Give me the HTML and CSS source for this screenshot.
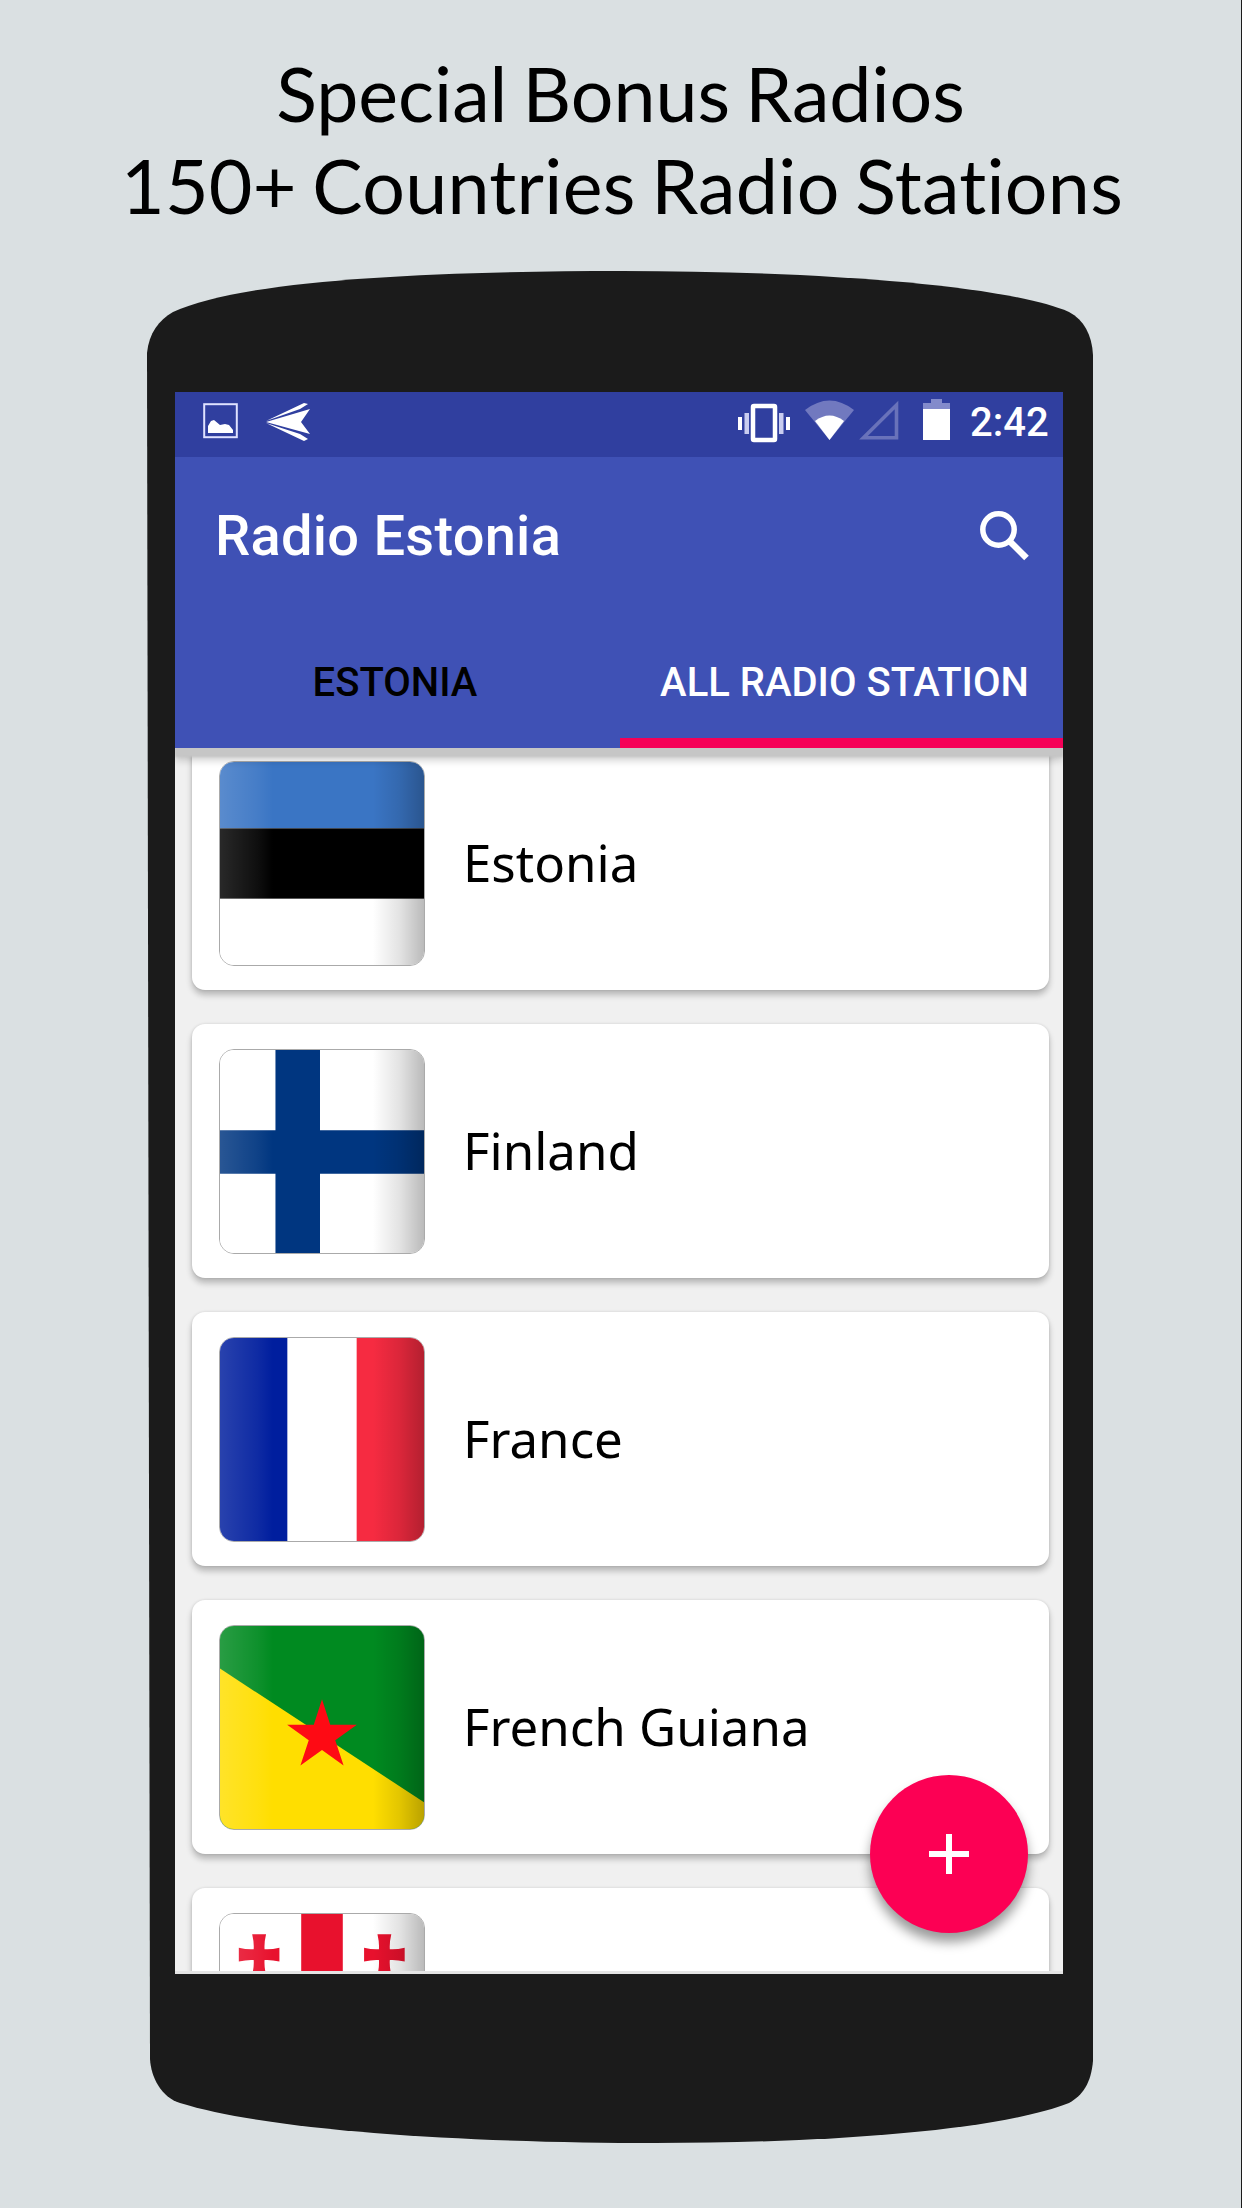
FILE: index.html
```html
<!DOCTYPE html>
<html lang="en">
<head>
    <meta charset="UTF-8">
    <meta name="viewport" content="width=device-width, initial-scale=1.0">
    <title>Radio Estonia</title>
    <link rel="stylesheet" href="styles.css">
</head>
<body>
    <h1 class="headline">
        <span class="headline-top">Special Bonus Radios</span>
        <span class="headline-bottom">150+ Countries Radio Stations</span>
    </h1>

    <div class="phone">
        <svg class="phone-body" viewBox="0 0 946 1873">
            <path fill="#1b1b1b" d="M0 82C2 62 12 49 26 41C95 9 280 0 475 0C670 0 860 14 922 41C937 49 945 64 946 84V1790C944 1812 936 1824 922 1832C850 1860 680 1872 508 1872C340 1872 130 1862 33 1832C14 1826 4 1806 3 1788Z"/>
        </svg>

        <div class="screen">
            <div class="status-bar">
                <svg width="35" height="36" viewBox="0 0 35 36">
                    <rect x="1.2" y="1.2" width="32.6" height="33" fill="none" stroke="#dfe2ff" stroke-width="2"/>
                    <path fill="#fff" d="M5 30V23L8 18L11 17L17 22L22 21L26 22L30 27V30Z"/>
                </svg>
                <svg class="arrow-icon" width="45" height="38" viewBox="0 0 45 38">
                    <path fill="#fff" d="M0 19L44 6L35 19L44 31ZM0 18L38 0L42 1L34 6ZM0 20L38 38L42 36L34 31Z"/>
                </svg>
                <svg class="vibrate-icon" width="52" height="40" viewBox="0 0 52 40">
                    <rect x="15" y="3" width="22" height="34" rx="1" fill="none" stroke="#fff" stroke-width="4.500"/>
                    <path fill="#fff" d="M0 14H4V27H0ZM48 14H52V27H48Z"/>
                    <path fill="#c9cdf0" d="M6.500 10H11V31H6.500ZM41 10H45.500V31H41Z"/>
                </svg>
                <svg class="wifi-icon" width="49" height="40" viewBox="0 0 49 40">
                    <path fill="#7179bf" d="M0 10Q24.500 -9 49 10L24.500 40Z"/>
                    <path fill="#fff" d="M10 21Q24.500 10 39 21L24.500 40Z"/>
                </svg>
                <svg class="signal-icon" width="40" height="40" viewBox="0 0 40 40">
                    <path fill="none" stroke="#6972ba" stroke-width="3.600" d="M4.500 37.700H37.500V5Z"/>
                </svg>
                <svg class="battery-icon" width="27" height="41" viewBox="0 0 27 41">
                    <path fill="#838bcb" d="M8 0H19V4H27V11H0V4H8Z"/>
                    <path fill="#fff" d="M0 10H27V41H0Z"/>
                </svg>
                <span class="clock">2:42</span>
            </div>

            <div class="app-bar">
                <div class="toolbar">
                    <span class="title">Radio Estonia</span>
                    <svg width="50" height="50" viewBox="0 0 50 50">
                        <circle cx="18.500" cy="18.500" r="15.700" fill="none" stroke="#fff" stroke-width="5.500"/>
                        <path stroke="#fff" stroke-width="6.500" d="M29 29.500L46.500 47"/>
                    </svg>
                </div>
                <div class="tabs">
                    <div class="tab">ESTONIA</div>
                    <div class="tab active">ALL RADIO STATION</div>
                </div>
            </div>

            <div class="list">
                <div class="card">
                    <svg class="flag" viewBox="0 0 206 205">
                        <defs>
                            <linearGradient id="gloss">
                                <stop offset="0" stop-color="#fff" stop-opacity=".16"/>
                                <stop offset=".18" stop-color="#fff" stop-opacity=".06"/>
                                <stop offset=".26" stop-color="#fff" stop-opacity="0"/>
                            </linearGradient>
                            <linearGradient id="shade">
                                <stop offset=".75" stop-color="#000" stop-opacity="0"/>
                                <stop offset=".88" stop-color="#000" stop-opacity=".11"/>
                                <stop offset="1" stop-color="#000" stop-opacity=".27"/>
                            </linearGradient>
                            <g id="shine">
                                <rect width="206" height="205" fill="url(#gloss)"/>
                                <rect width="206" height="205" fill="url(#shade)"/>
                            </g>
                        </defs>
                        <rect width="206" height="205" fill="#fff"/>
                        <rect width="206" height="67" fill="#3a75c4"/>
                        <rect y="67" width="206" height="71" fill="#000"/>
                        <use href="#shine"/>
                    </svg>
                    <span class="country">Estonia</span>
                </div>
                <div class="card">
                    <svg class="flag" viewBox="0 0 206 205">
                        <rect width="206" height="205" fill="#fff"/>
                        <path fill="#003680" d="M56 0H101V205H56ZM0 81H206V125H0Z"/>
                        <use href="#shine"/>
                    </svg>
                    <span class="country">Finland</span>
                </div>
                <div class="card">
                    <svg class="flag" viewBox="0 0 206 205">
                        <rect width="206" height="205" fill="#fff"/>
                        <rect width="68" height="205" fill="#001e9e"/>
                        <rect x="138" width="68" height="205" fill="#f62b41"/>
                        <use href="#shine"/>
                    </svg>
                    <span class="country">France</span>
                </div>
                <div class="card">
                    <svg class="flag" viewBox="0 0 206 205">
                        <rect width="206" height="205" fill="#008a20"/>
                        <path fill="#ffde00" d="M0 43L206 178V205H0Z"/>
                        <path fill="#fe0a14" d="M103 74L111.300 99.700H138.200L116.400 115.500L124.800 141L103 125.300L81.200 141L89.600 115.500L67.800 99.700H94.700Z"/>
                        <use href="#shine"/>
                    </svg>
                    <span class="country">French Guiana</span>
                </div>
                <div class="card">
                    <svg class="flag" viewBox="0 0 206 205">
                        <defs>
                            <path id="cross" d="M-7 -20.500H7Q5 -12 5.500 -5.500Q12 -5 20.500 -7V7Q12 5 5.500 5.500Q5 12 7 20.500H-7Q-5 12 -5.500 5.500Q-12 5 -20.500 7V-7Q-12 -5 -5.500 -5.500Q-5 -12 -7 -20.500Z"/>
                        </defs>
                        <rect width="206" height="205" fill="#fff"/>
                        <g fill="#e8112d">
                            <path d="M82 0H124V205H82ZM0 82H206V123H0Z"/>
                            <use href="#cross" x="39.500" y="41"/>
                            <use href="#cross" x="166" y="41"/>
                            <use href="#cross" x="39.500" y="164"/>
                            <use href="#cross" x="166" y="164"/>
                        </g>
                        <use href="#shine"/>
                    </svg>
                </div>
            </div>

            <button class="fab" aria-label="Add">
                <svg width="42" height="42" viewBox="0 0 42 42">
                    <path stroke="#fff" stroke-width="6" d="M21 1V41M1 21H41"/>
                </svg>
            </button>
        </div>
    </div>
</body>
</html>
```

FILE: styles.css
```css
* {
    box-sizing: border-box;
}

body {
    margin: 0;
    width: 1242px;
    height: 2208px;
    overflow: hidden;
    background-color: #dae0e2;
    border-right: 1px solid #1b1b1b;
}

.headline {
    display: flex;
    flex-direction: column;
    align-items: center;
    margin: 0;
    height: 271px;
    padding-top: 47px;
    font-family: Lato, sans-serif;
    font-size: 75.3px;
    font-weight: 400;
    font-variant-ligatures: none;
    line-height: 92px;
    word-spacing: -4px;
    color: #000;
    white-space: nowrap;
}

.headline-bottom {
    padding-left: 3px;
    letter-spacing: 0.3px;
}

.phone {
    display: grid;
    width: 946px;
    height: 1873px;
    margin-left: 147px;
}

.phone-body,
.screen {
    grid-area: 1 / 1;
}

.phone-body {
    width: 946px;
    height: 1873px;
}

.screen {
    position: relative;
    display: flex;
    flex-direction: column;
    width: 888px;
    height: 1582px;
    margin: 121px 0 0 28px;
    overflow: hidden;
    background-color: #f0f0f0;
    border-bottom: 3px solid #e4e4e4;
    font-family: Roboto, sans-serif;
    color: #fff;
}

.status-bar {
    display: flex;
    align-items: flex-start;
    flex: none;
    height: 65px;
    padding: 11px 14px 0 28px;
    background-color: #303f9f;
}

.arrow-icon {
    margin-left: 28px;
}

.vibrate-icon {
    margin-left: auto;
}

.wifi-icon {
    margin: -3px 0 0 15px;
}

.signal-icon {
    margin: -3px 0 0 5px;
}

.battery-icon {
    margin: -4px 0 0 24px;
}

.clock {
    width: 79px;
    margin-left: 20px;
    font-size: 40px;
    font-weight: 500;
    line-height: 40px;
    white-space: nowrap;
}

.app-bar {
    flex: none;
    height: 291px;
    background-color: #3f51b5;
    box-shadow: 0 9px 2px #c6c6c6, 0 12px 8px rgba(0, 0, 0, 0.2);
    z-index: 1;
}

.toolbar {
    display: flex;
    align-items: center;
    justify-content: space-between;
    height: 158px;
    padding: 0 33px 0 40px;
}

.title {
    font-size: 56px;
    font-weight: 500;
    letter-spacing: 0.25px;
}

.tabs {
    display: grid;
    grid-template-columns: 445px 443px;
    height: 133px;
}

.tab {
    display: flex;
    align-items: center;
    justify-content: center;
    padding: 11px 5px 0 0;
    border-bottom: 10px solid transparent;
    font-size: 40px;
    font-weight: 500;
    color: #000;
    white-space: nowrap;
}

.tab.active {
    padding: 11px 0 0 6px;
    color: #fff;
    border-bottom-color: #f50057;
}

.list {
    flex: 1;
    display: flex;
    flex-direction: column;
    gap: 34px;
    min-height: 0;
    margin-top: -12px;
    padding: 0 14px 0 17px;
    overflow: hidden;
}

.card {
    flex: none;
    display: flex;
    align-items: center;
    gap: 38px;
    height: 254px;
    padding-left: 27px;
    background-color: #fff;
    border-radius: 13px;
    box-shadow: 0 5px 6px rgba(0, 0, 0, 0.24), 0 0 3px rgba(0, 0, 0, 0.12);
}

.flag {
    width: 206px;
    height: 205px;
    border: 1px solid #aaa;
    border-radius: 15px;
}

.country {
    margin-bottom: 2px;
    font-family: "Noto Sans", sans-serif;
    font-size: 51px;
    color: #000;
}

.fab {
    position: absolute;
    right: 35px;
    bottom: 38px;
    display: flex;
    align-items: center;
    justify-content: center;
    width: 158px;
    height: 158px;
    padding: 0;
    border: none;
    border-radius: 50%;
    background-color: #fc0054;
    box-shadow: 0 9px 12px rgba(0, 0, 0, 0.4);
    z-index: 2;
}
```
